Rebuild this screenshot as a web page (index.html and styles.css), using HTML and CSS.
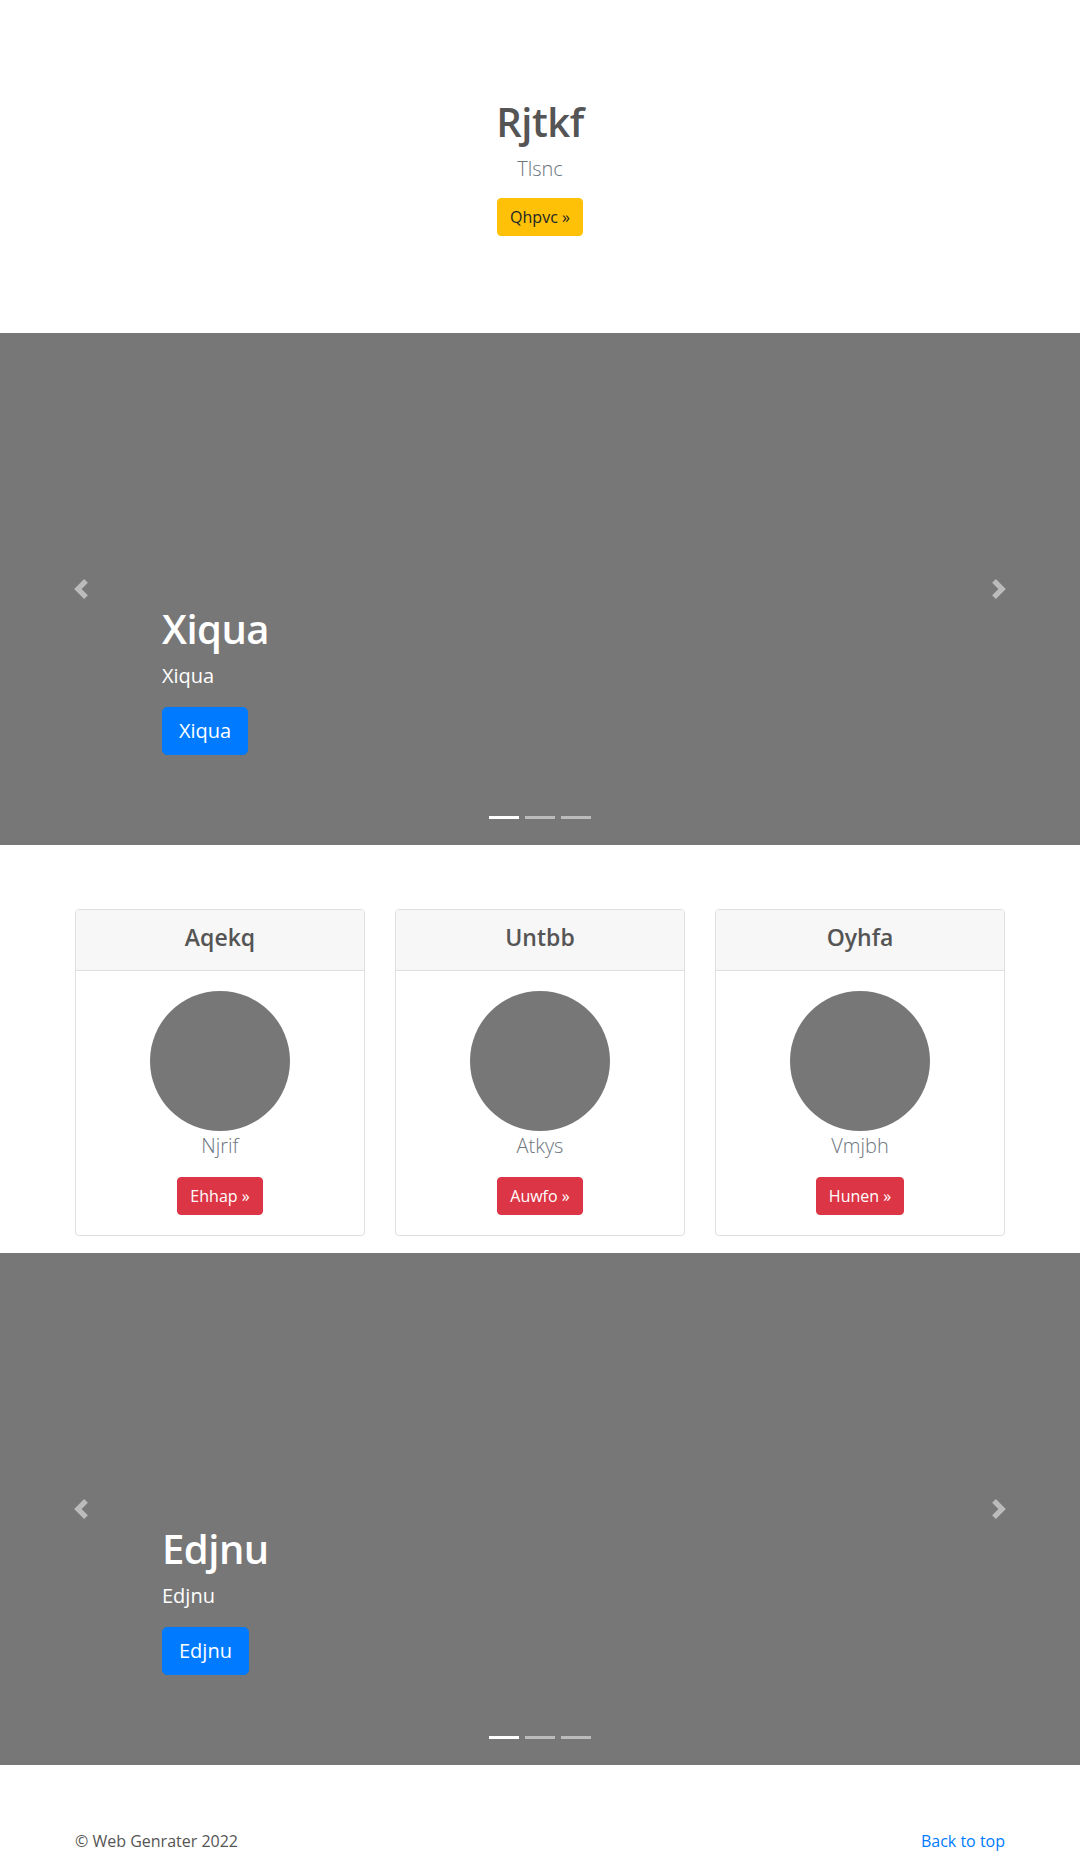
FILE: index.html
```html
<!DOCTYPE html>
<html lang="en">
<head>
<meta charset="utf-8">
<title>Web Genrater</title>
<link rel="stylesheet" href="styles.css">
</head>
<body>
<header class="intro">
  <h1 class="intro-title">Rjtkf</h1>
  <p class="intro-lead">Tlsnc</p>
  <a class="btn btn-warning" href="#">Qhpvc &raquo;</a>
</header>

<div class="carousel">
  <ol class="indicators">
    <li class="active"></li>
    <li></li>
    <li></li>
  </ol>
  <div class="caption">
    <h1 class="caption-title">Xiqua</h1>
    <p class="caption-text">Xiqua</p>
    <p class="caption-action"><a class="btn btn-lg btn-primary" href="#">Xiqua</a></p>
  </div>
  <a class="control control-prev" href="#"><svg width="20" height="20" viewBox="0 0 8 8"><path fill="#fff" d="M5.25 0l-4 4 4 4 1.5-1.5L4.25 4l2.5-2.5L5.25 0z"/></svg></a>
  <a class="control control-next" href="#"><svg width="20" height="20" viewBox="0 0 8 8"><path fill="#fff" d="M2.75 0l-1.5 1.5L3.75 4l-2.5 2.5L2.75 8l4-4-4-4z"/></svg></a>
</div>

<section class="container cards">
  <div class="card">
    <div class="card-header"><h4 class="card-title">Aqekq</h4></div>
    <div class="card-body">
      <div class="circle"></div>
      <p class="card-text">Njrif</p>
      <div class="card-action"><a class="btn btn-danger" href="#">Ehhap &raquo;</a></div>
    </div>
  </div>
  <div class="card">
    <div class="card-header"><h4 class="card-title">Untbb</h4></div>
    <div class="card-body">
      <div class="circle"></div>
      <p class="card-text">Atkys</p>
      <div class="card-action"><a class="btn btn-danger" href="#">Auwfo &raquo;</a></div>
    </div>
  </div>
  <div class="card">
    <div class="card-header"><h4 class="card-title">Oyhfa</h4></div>
    <div class="card-body">
      <div class="circle"></div>
      <p class="card-text">Vmjbh</p>
      <div class="card-action"><a class="btn btn-danger" href="#">Hunen &raquo;</a></div>
    </div>
  </div>
</section>

<div class="carousel">
  <ol class="indicators">
    <li class="active"></li>
    <li></li>
    <li></li>
  </ol>
  <div class="caption">
    <h1 class="caption-title">Edjnu</h1>
    <p class="caption-text">Edjnu</p>
    <p class="caption-action"><a class="btn btn-lg btn-primary" href="#">Edjnu</a></p>
  </div>
  <a class="control control-prev" href="#"><svg width="20" height="20" viewBox="0 0 8 8"><path fill="#fff" d="M5.25 0l-4 4 4 4 1.5-1.5L4.25 4l2.5-2.5L5.25 0z"/></svg></a>
  <a class="control control-next" href="#"><svg width="20" height="20" viewBox="0 0 8 8"><path fill="#fff" d="M2.75 0l-1.5 1.5L3.75 4l-2.5 2.5L2.75 8l4-4-4-4z"/></svg></a>
</div>

<footer class="container footer">
  <p class="footer-copy">&copy; Web Genrater 2022</p>
  <p class="footer-link"><a href="#">Back to top</a></p>
</footer>
</body>
</html>
```

FILE: styles.css
```css
* { box-sizing: border-box; }

html, body { margin: 0; padding: 0; }

body {
  font-family: "Open Sans", "Noto Sans", "Liberation Sans", sans-serif;
  font-size: 16px;
  line-height: 1.5;
  color: #555;
  background: #fff;
}

h1, h4, p { margin-top: 0; }

a { color: #007bff; text-decoration: none; }

.container {
  width: 930px;
  margin-left: auto;
  margin-right: auto;
}

/* buttons */
.btn {
  display: inline-block;
  font-size: 16px;
  line-height: 1.5;
  padding: 6px 12px;
  border: 1px solid transparent;
  border-radius: 4px;
  font-weight: 400;
  text-align: center;
  vertical-align: middle;
}
.btn-lg {
  font-size: 20px;
  padding: 8px 16px;
  border-radius: 5px;
}
.btn-warning { background: #ffc107; border-color: #ffc107; color: #212529; }
.btn-primary { background: #007bff; border-color: #007bff; color: #fff; }
.btn-danger { background: #dc3545; border-color: #dc3545; color: #fff; }

/* intro */
.intro {
  text-align: center;
  padding: 98px 0 97px;
}
.intro-title {
  font-size: 40px;
  line-height: 1.2;
  font-weight: 600;
  margin-bottom: 8px;
  color: #555;
  letter-spacing: -0.5px;
}
.intro-lead {
  font-size: 20px;
  font-weight: 300;
  line-height: 1.5;
  color: #6c757d;
  margin-bottom: 14px;
}

/* carousel */
.carousel {
  position: relative;
  height: 512px;
  background: #777;
  margin-bottom: 64px;
  overflow: hidden;
}
.caption {
  position: absolute;
  left: 15%;
  right: 15%;
  bottom: 48px;
  padding: 20px 0;
  color: #fff;
  text-align: left;
}
.caption-title {
  font-size: 40px;
  line-height: 1.2;
  font-weight: 600;
  margin-bottom: 8px;
  letter-spacing: -0.5px;
}
.caption-text {
  font-size: 20px;
  line-height: 1.5;
  margin-bottom: 16px;
}
.caption-action { margin-bottom: 22px; }

.control {
  position: absolute;
  top: 0;
  bottom: 0;
  width: 15%;
  display: flex;
  align-items: center;
  justify-content: center;
  opacity: 0.5;
}
.control svg { display: block; }
.control-prev { left: 0; }
.control-next { right: 0; }

.indicators {
  position: absolute;
  left: 0;
  right: 0;
  bottom: 0;
  margin: 0 0 16px;
  padding: 0;
  list-style: none;
  display: flex;
  justify-content: center;
}
.indicators li {
  width: 30px;
  height: 23px;
  margin: 0 3px;
  border-top: 10px solid transparent;
  border-bottom: 10px solid transparent;
  background: #fff;
  background-clip: padding-box;
  opacity: 0.5;
}
.indicators li.active { opacity: 1; }

/* cards */
.cards {
  display: grid;
  grid-template-columns: repeat(3, 1fr);
  column-gap: 30px;
  padding-bottom: 17px;
}
.card {
  border: 1px solid #dfdfdf;
  border-radius: 4px;
  background: #fff;
  overflow: hidden;
}
.card-header {
  background: #f7f7f7;
  border-bottom: 1px solid #dfdfdf;
  padding: 14px 20px 10px;
  text-align: center;
}
.card-title {
  font-size: 23px;
  line-height: 1.2;
  font-weight: 600;
  margin: 0 0 8px;
  color: #555;
}
.card-body {
  padding: 20px;
  text-align: center;
}
.circle {
  width: 140px;
  height: 140px;
  border-radius: 50%;
  background: #777;
  margin: 0 auto;
}
.card-text {
  font-size: 20px;
  font-weight: 300;
  line-height: 1.5;
  color: #6c757d;
  margin-bottom: 16px;
}
.card-action {
  display: flex;
  justify-content: center;
}

/* footer */
.footer {
  display: flex;
  justify-content: space-between;
}
.footer p { margin-bottom: 16px; }
```
